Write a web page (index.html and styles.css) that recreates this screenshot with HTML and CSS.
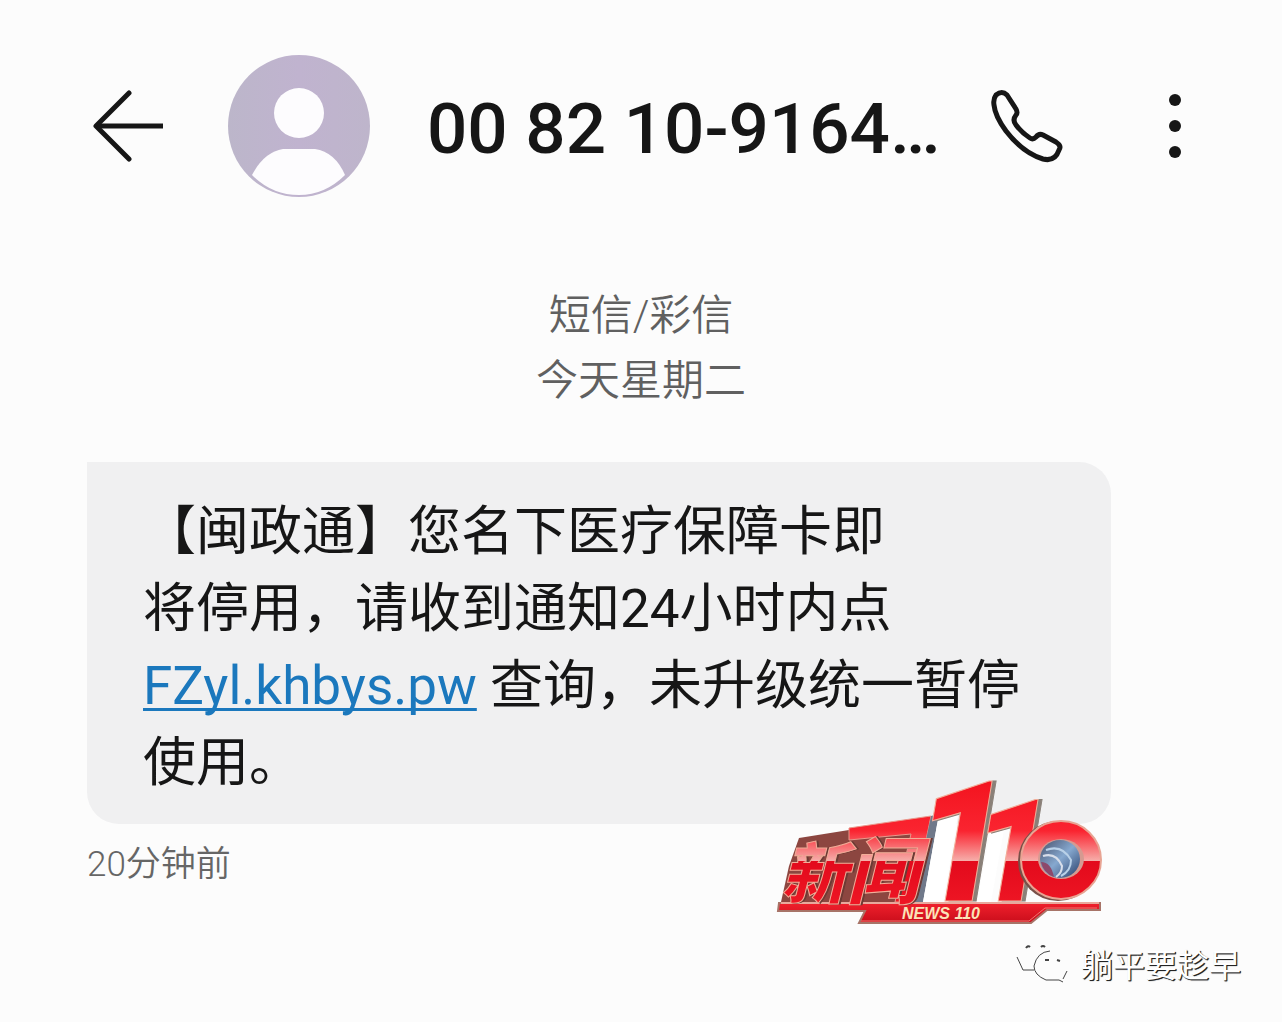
FILE: index.html
```html
<!DOCTYPE html>
<html lang="zh-CN">
<head>
    <meta charset="UTF-8">
    <meta name="viewport" content="width=device-width, initial-scale=1.0">
    <title>短信</title>
    <link rel="stylesheet" href="styles.css">
</head>
<body>
    <header class="topbar">
        <button class="iconbtn back" type="button" aria-label="返回">
            <svg width="72" height="72" viewBox="0 0 72 72" fill="none" stroke="#161616" stroke-width="5" stroke-linejoin="round">
                <path d="M37 3 4 36l33 33" stroke-linecap="round"/>
                <path d="M4 36h67"/>
            </svg>
        </button>
        <svg class="avatar" width="144" height="144" viewBox="0 0 144 144">
            <defs>
                <linearGradient id="av" x1="0" y1="0" x2="1" y2="0">
                    <stop offset="0" stop-color="#bcb6ca"/>
                    <stop offset=".5" stop-color="#c0b3cf"/>
                    <stop offset="1" stop-color="#beb5cb"/>
                </linearGradient>
            </defs>
            <circle cx="72" cy="72" r="71" fill="url(#av)"/>
            <circle cx="72" cy="59" r="25" fill="#fdfcfe"/>
            <path d="M25 121Q37 98 56 95H88Q108 98 118 121Q98 141 72 141Q45 141 25 121Z" fill="#fdfcfe"/>
        </svg>
        <h1 class="number">00 82 10-9164…</h1>
        <button class="iconbtn call" type="button" aria-label="拨打电话">
            <svg width="74" height="74" viewBox="0 0 74 74" fill="none" stroke="#161616" stroke-width="5" stroke-linejoin="round">
                <path d="M6 6Q12 1 17 6L26 20Q28 24 26 26Q22 31 26 36Q32 44 40 49Q43 51 46 48Q49 44 53 46L66 53Q72 57 69 61Q65 73 53 70Q33 64 16 42Q5 27 4 16Q3 10 6 6Z"/>
            </svg>
        </button>
        <button class="iconbtn more" type="button" aria-label="更多">
            <svg width="14" height="66" viewBox="0 0 14 66" fill="#161616">
                <circle cx="7" cy="7" r="6"/>
                <circle cx="7" cy="33" r="6"/>
                <circle cx="7" cy="59" r="6"/>
            </svg>
        </button>
    </header>

    <main class="thread">
        <p class="day">短信/彩信<br>今天星期二</p>

        <div class="message">
            <p class="bubble">【闽政通】您名下医疗保障卡即<br>将停用，请收到通知24小时内点<br><a href="#">FZyl.khbys.pw</a> 查询，未升级统一暂停<br>使用。</p>
            <p class="time">20分钟前</p>

            <!-- channel logo -->
            <svg class="logo" width="336" height="156" viewBox="0 0 336 156">
                <defs>
                    <linearGradient id="red" gradientUnits="userSpaceOnUse" x1="0" y1="10" x2="0" y2="132">
                        <stop offset="0" stop-color="#f3141f"/>
                        <stop offset=".4" stop-color="#fa2430"/>
                        <stop offset=".65" stop-color="#f6b0ac"/>
                        <stop offset=".65" stop-color="#e30a1c"/>
                        <stop offset="1" stop-color="#ee1624"/>
                    </linearGradient>
                    <linearGradient id="bar" x1="0" y1="0" x2="0" y2="1">
                        <stop offset="0" stop-color="#f0202c"/>
                        <stop offset="1" stop-color="#c90d1b"/>
                    </linearGradient>
                    <linearGradient id="lens" x1="0" y1="0" x2="1" y2="1">
                        <stop offset="0" stop-color="#47506a"/>
                        <stop offset=".5" stop-color="#86a8cf"/>
                        <stop offset="1" stop-color="#263d68"/>
                    </linearGradient>
                </defs>
                <!-- base plate -->
                <path d="M4 131H325V138H272L256 151H84L90 139H3Z" fill="url(#bar)" stroke="#a77468" stroke-width="2"/>
                <path d="M6 131H324" stroke="#e8a99d" stroke-width="2"/>
                <path d="M86 149H254L270 136H322" stroke="#ef7770" stroke-width="1" fill="none"/>
                <!-- frame round the two characters -->
                <path d="M24 66 74 58 140 52 130 130H6L14 94Z" fill="#8c4640"/>
                <path d="M74 56 156 44 138 130H120L136 62 74 68Z" fill="url(#red)" stroke="#e9988b" stroke-width="1"/>
                <path d="M156 44 164 42 148 130H138Z" fill="#70798a"/>
                <path d="M164 42 184 38 168 130H148Z" fill="#fff"/>
                <text class="logotext" x="6" y="126"><tspan font-size="66">新</tspan><tspan font-size="72">闻</tspan></text>
                <path d="M216 56 230 52 216 130H202Z" fill="#fff"/>
                <text class="logonum" x="139" y="129"><tspan font-size="168">1</tspan><tspan x="197" font-size="142">1</tspan></text>
                <!-- lens in place of the zero -->
                <ellipse cx="283" cy="89" rx="40" ry="40" fill="#785048"/>
                <ellipse cx="286" cy="88" rx="40" ry="39" fill="url(#red)" stroke="#e8a493" stroke-width="2"/>
                <ellipse cx="286" cy="87" rx="23" ry="20" fill="#d59a91"/>
                <ellipse cx="285" cy="87" rx="20" ry="19" fill="url(#lens)"/>
                <path d="M271 78Q287 72 296 88Q296 99 286 104" fill="none" stroke="#b9d1e8" stroke-width="2"/>
                <path d="M268 84Q281 80 287 94Q287 101 281 105" fill="none" stroke="#d8deea" stroke-width="2"/>
                <path d="M266 90Q276 90 279 105Q268 101 266 90" fill="#8d496b"/>
                <text class="logocaption" x="127" y="147">NEWS 110</text>
            </svg>
        </div>
    </main>

    <footer class="source">
        <svg width="54" height="40" viewBox="0 0 54 40" fill="none" stroke="#444" stroke-width="1">
            <path d="M2 14 8 27H19"/>
            <path d="M35 8Q22 9 19 23Q19 32 31 37H44L48 39M48 36L52 28"/>
            <path d="M11 5Q13 2 15 4M26 4Q28 2 30 4M30 17H34M42 17 45 18" stroke-width="2"/>
        </svg>
        <span>躺平要趁早</span>
    </footer>
</body>
</html>
```
FILE: styles.css
```css
* {
    box-sizing: border-box;
}
body {
    margin: 0;
    background: #fcfcfc;
    color: #161616;
    font-family: Roboto, "Noto Sans CJK SC", sans-serif;
}
h1, p {
    margin: 0;
}
.topbar {
    display: flex;
    align-items: center;
    padding: 54px 100px 0 92px;
}
.iconbtn {
    display: flex;
    flex: none;
    padding: 0;
    border: none;
    background: none;
    cursor: pointer;
}
.avatar {
    flex: none;
    margin: 0 56px 0 63px;
}
.number {
    flex: 1;
    min-width: 0;
    padding-top: 6px;
    font-size: 71px;
    line-height: 84px;
    font-weight: 500;
    white-space: nowrap;
}
.more {
    margin-left: 104px;
}
.day {
    padding-top: 85px;
    text-align: center;
    color: #606060;
    font-size: 42px;
    line-height: 65px;
    font-weight: 350;
}
.message {
    position: relative;
    margin: 49px 171px 0 87px;
}
.bubble {
    padding: 32px 56px 22px;
    border-radius: 0 32px 32px 32px;
    background: #f0f0f1;
    font-size: 53px;
    line-height: 77px;
}
.bubble a {
    color: #1b78bd;
    text-decoration-thickness: 3px;
    text-underline-offset: 4px;
    text-decoration-skip-ink: none;
}
.time {
    padding-top: 16px;
    color: #666;
    font-size: 35px;
    line-height: 50px;
    font-weight: 350;
}
.logo {
    position: absolute;
    right: 0;
    bottom: -38px;
    overflow: visible;
}
.logotext,
.logonum {
    fill: url(#red);
    stroke: #f2ad98;
    stroke-width: 1px;
    font-weight: 900;
    font-style: italic;
}
.logotext {
    font-family: "Noto Sans CJK SC", sans-serif;
    filter: drop-shadow(2px 0 0 #6b3a34);
}
.logonum {
    font-family: Roboto, sans-serif;
    filter: drop-shadow(4px 0 0 #8a8078);
}
.logocaption {
    fill: #fbe3b8;
    font-family: "Liberation Sans", sans-serif;
    font-size: 16px;
    font-weight: bold;
    font-style: italic;
}
.source {
    display: flex;
    justify-content: flex-end;
    align-items: center;
    gap: 12px;
    padding: 48px 41px 0 0;
    color: #fff;
    font-family: "Noto Sans CJK SC", sans-serif;
    font-size: 32px;
    line-height: 50px;
    text-shadow: 1px 1px 1px #222, 1px 1px 0 #333;
}
```
